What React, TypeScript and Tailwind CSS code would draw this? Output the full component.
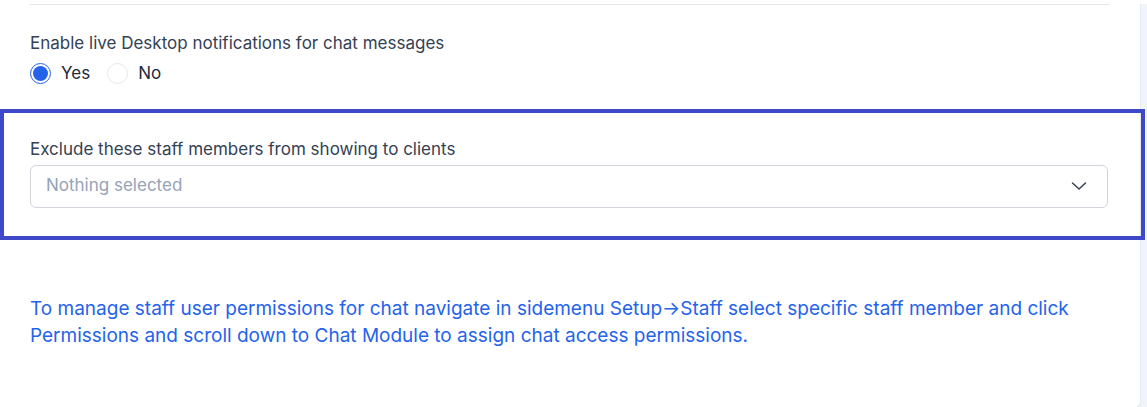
export default function App() {
  return (
    <div className="h-[407px] w-[1147px] bg-[#f1f5f9] font-['Inter',sans-serif]">
      <div className="h-[404px] w-[1141px] rounded-br-md bg-white border-r border-b border-[#e2e8f0]">
        <div className="px-[30px]">
          <hr className="mt-[4px] border-t border-[#e5e7eb]" />
          <div className="pt-[26px]">
            <p className="text-[17px] leading-[24px] text-[#334155]">
              Enable live Desktop notifications for chat messages
            </p>
            <div className="mt-[6px] flex items-center">
              <label className="flex items-center gap-[10px]">
                <span className="flex h-[21px] w-[21px] items-center justify-center rounded-full border border-[#2563eb] bg-white">
                  <span className="h-[15px] w-[15px] rounded-full bg-[#2563eb]" />
                </span>
                <span className="text-[17px] text-[#1e293b]">Yes</span>
              </label>
              <label className="ml-[17px] flex items-center gap-[10px]">
                <span className="h-[21px] w-[21px] rounded-full border border-[#e5e7eb] bg-white" />
                <span className="text-[17px] text-[#1e293b]">No</span>
              </label>
            </div>
          </div>
        </div>

        <div className="mt-[22px] h-[131px] w-[1145px] border-4 border-[#3f48c8] px-[26px] pt-[24px]">
          <p className="text-[17px] leading-[24px] text-[#334155]">
            Exclude these staff members from showing to clients
          </p>
          <div className="mt-[4px] flex h-[43px] w-[1078px] items-center justify-between rounded-md border border-[#d1d5db] px-[15px]">
            <span className="text-[17px] text-[#94a3b8]">Nothing selected</span>
            <svg width="16" height="10" viewBox="0 0 16 10" fill="none" stroke="#374151" strokeWidth="1.5" strokeLinecap="round" strokeLinejoin="round" className="mr-[5px]">
              <path d="M1.5 2l6.5 6 6.5-6" />
            </svg>
          </div>
        </div>

        <div className="px-[30px] pt-[55px]">
          <p className="text-[19px] leading-[27px] text-[#2563eb]">
            To manage staff user permissions for chat navigate in sidemenu Setup→Staff select specific staff member and click
            Permissions and scroll down to Chat Module to assign chat access permissions.
          </p>
        </div>
      </div>
    </div>
  );
}
